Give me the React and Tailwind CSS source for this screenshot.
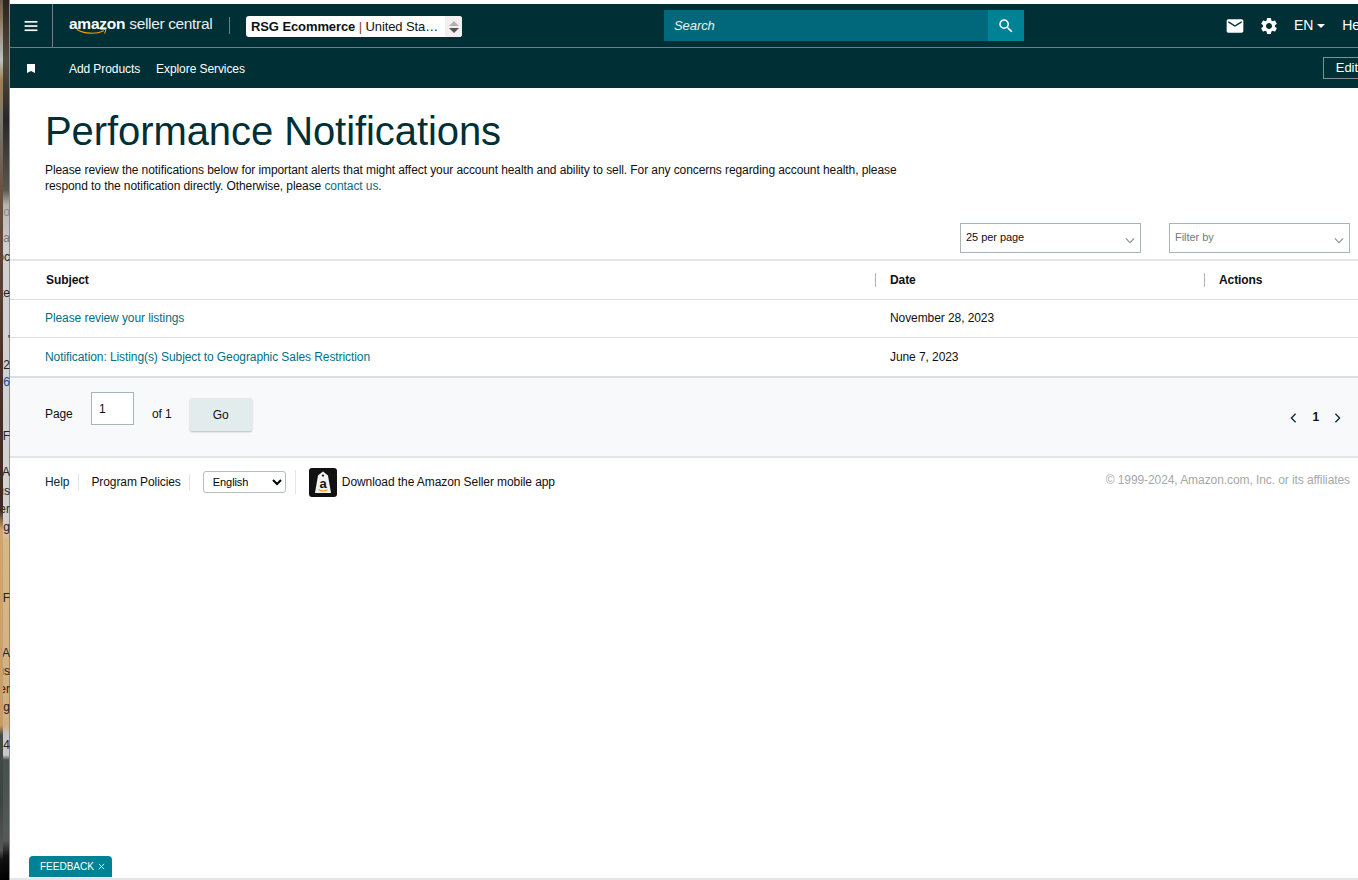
import React from "react";

const stripLines = [
  ["mt-[204px] text-[#8a8a8a]", "o"],
  ["mt-[10px] text-[#777]", "na"],
  ["mt-[3px] text-[#222]", "oc"],
  ["mt-[20px] text-[#222]", "te"],
  ["mt-[31px] text-[#222]", "'"],
  ["mt-[9px] text-[#222]", "02"],
  ["mt-[1px] text-[#1a4a9a]", "06"],
  ["mt-[38px] text-[#222]", "F"],
  ["mt-[20px] text-[#222]", "TA"],
  ["mt-[3px] text-[#222]", "us"],
  ["mt-[2px] text-[#222]", "er"],
  ["mt-[2px] text-[#222]", "ig"],
  ["mt-[55px] text-[#222]", "F"],
  ["mt-[39px] text-[#222]", "TA"],
  ["mt-[2px] text-[#222]", "us"],
  ["mt-[2px] text-[#222]", "er"],
  ["mt-[2px] text-[#222]", "ig"],
  ["mt-[22px] text-[#222]", "4"],
];

function Strip() {
  return (
    <div className="flex h-[880px] w-[10px] shrink-0 overflow-hidden">
      <div className="h-full w-[3px] bg-[linear-gradient(180deg,#6b5a4a_0px,#8a7458_16px,#b9c4c4_60px,#a08050_80px,#7a7a70_120px,#6a5040_190px,#4a3028_360px,#3e2a22_510px,#d2a56e_530px,#c89c68_725px,#444a44_735px,#3c4440_800px,#555_850px,#111_860px,#000_880px)]" />
      <div className="flex h-full w-[7px] flex-col bg-[linear-gradient(180deg,#2a2420_0px,#554b40_60px,#2a2826_120px,#5a5650_190px,#b8b4b0_205px,#d0d0d0_250px,#d2d2d2_520px,#d8b888_540px,#d0b080_725px,#c8c8c8_735px,#c8c8c8_755px,#46504c_760px,#555a58_840px,#111_856px,#000_880px)] shadow-[inset_-1px_0_0_#8c8c8c]">
        {stripLines.map(([cls, text], i) => (
          <div key={i} className={`flex h-4 shrink-0 justify-end overflow-hidden whitespace-nowrap text-[12px] leading-4 ${cls}`}>
            {text}
          </div>
        ))}
      </div>
    </div>
  );
}

function Icon({ d, className }) {
  return (
    <svg viewBox="0 0 24 24" fill="currentColor" className={className}>
      <path d={d} />
    </svg>
  );
}

function Chevron({ className }) {
  return (
    <svg viewBox="0 0 12 8" fill="none" stroke="currentColor" strokeWidth="1.5" className={className}>
      <path d="M1 1.5 6 6.5 11 1.5" />
    </svg>
  );
}

function Header() {
  return (
    <header className="flex h-[84px] flex-col bg-[#002f36] text-white">
      <div className="flex h-[44px] shrink-0 items-center border-b border-[#6a8084]">
        <div className="flex h-full w-[43px] shrink-0 items-center justify-center border-r border-[#6a8084]">
          <svg viewBox="0 0 14 12" className="h-[11px] w-[14px] translate-y-[1px]" fill="#fff">
            <rect y="0" width="14" height="1.8" />
            <rect y="4.6" width="14" height="1.8" />
            <rect y="9.2" width="14" height="1.8" />
          </svg>
        </div>
        <div className="relative ml-[16px] w-[144px] shrink-0 pb-[3px] text-[15.5px] leading-5 tracking-[-0.25px] whitespace-nowrap">
          <span className="font-bold">amazon</span> <span className="tracking-[-0.35px] text-[#e8eeee]">seller central</span>
          <svg viewBox="0 0 38 8" className="absolute left-[7px] top-[14px] h-[7px] w-[32px]" fill="none">
            <path d="M1 1.5C10 7 24 7.5 33 3" stroke="#f90" strokeWidth="1.4" />
            <path d="M29 1.5 35.5 1.5 34 6.5" stroke="#f90" strokeWidth="1.2" />
          </svg>
        </div>
        <div className="ml-[16px] h-[17px] w-px shrink-0 bg-[#6a8084]" />
        <div className="ml-[16px] flex h-[21px] w-[216px] shrink-0 translate-y-[1px] items-center rounded-[3px] bg-white text-[13px] text-[#0f1111]">
          <span className="ml-[5px] w-[188px] overflow-hidden text-ellipsis whitespace-nowrap tracking-[-0.1px]">
            <span className="font-bold">RSG Ecommerce</span>
            <span className="text-[#8a3a20]"> | </span>United States
          </span>
          <span className="ml-auto flex h-full w-[17px] flex-col items-center justify-center gap-[2px] rounded-r-[3px] bg-[#f0f0f0]">
            <span className="h-0 w-0 border-x-[5px] border-b-[5px] border-x-transparent border-b-[#b0b0b0]" />
            <span className="h-0 w-0 border-x-[5px] border-t-[5px] border-x-transparent border-t-[#555]" />
          </span>
        </div>
        <div className="ml-[202px] flex h-[31px] w-[360px] shrink-0">
          <div className="flex flex-1 items-center bg-[#00687a] pl-[10px] text-[13px] italic text-[#e8f0f0]">Search</div>
          <div className="flex w-[36px] items-center justify-center bg-[#008296]">
            <Icon className="h-[18px] w-[18px]" d="M15.5 14h-.79l-.28-.27A6.471 6.471 0 0 0 16 9.5 6.5 6.5 0 1 0 9.5 16c1.61 0 3.09-.59 4.23-1.57l.27.28v.79l5 4.99L20.49 19l-4.99-5zm-6 0C7.01 14 5 11.99 5 9.5S7.01 5 9.5 5 14 7.01 14 9.5 11.99 14 9.5 14z" />
          </div>
        </div>
        <Icon className="ml-[201px] h-[20px] w-[20px] shrink-0" d="M20 4H4c-1.1 0-1.99.9-1.99 2L2 18c0 1.1.9 2 2 2h16c1.1 0 2-.9 2-2V6c0-1.1-.9-2-2-2zm0 4l-8 5-8-5V6l8 5 8-5v2z" />
        <Icon className="ml-[14px] h-[20px] w-[20px] shrink-0" d="M19.14 12.94c.04-.3.06-.61.06-.94 0-.32-.02-.64-.07-.94l2.03-1.58a.49.49 0 0 0 .12-.61l-1.92-3.32a.488.488 0 0 0-.59-.22l-2.39.96c-.5-.38-1.03-.7-1.62-.94l-.36-2.54a.484.484 0 0 0-.48-.41h-3.84c-.24 0-.43.17-.47.41l-.36 2.54c-.59.24-1.13.57-1.62.94l-2.39-.96c-.22-.08-.47 0-.59.22L2.74 8.87c-.12.21-.08.47.12.61l2.03 1.58c-.05.3-.09.63-.09.94s.02.64.07.94l-2.03 1.58a.49.49 0 0 0-.12.61l1.92 3.32c.12.22.37.29.59.22l2.39-.96c.5.38 1.03.7 1.62.94l.36 2.54c.05.24.24.41.48.41h3.84c.24 0 .44-.17.47-.41l.36-2.54c.59-.24 1.13-.56 1.62-.94l2.39.96c.22.08.47 0 .59-.22l1.92-3.32c.12-.22.07-.47-.12-.61l-2.01-1.58zM12 15.6c-1.98 0-3.6-1.62-3.6-3.6s1.62-3.6 3.6-3.6 3.6 1.62 3.6 3.6-1.62 3.6-3.6 3.6z" />
        <span className="ml-[15px] shrink-0 text-[14px]">EN</span>
        <span className="ml-[4px] h-0 w-0 shrink-0 border-x-[4px] border-t-[4px] border-x-transparent border-t-white" />
        <span className="ml-[17px] shrink-0 text-[14px] whitespace-nowrap">Help</span>
      </div>
      <div className="flex min-h-0 flex-1 items-center pt-[2px] text-[12px] tracking-[-0.08px]">
        <svg viewBox="0 0 8 9" className="ml-[17px] h-[9px] w-[8px] shrink-0 -translate-y-[1px]" fill="#fff">
          <path d="M0 0h8v9L4 7 0 9z" />
        </svg>
        <span className="ml-[34px] shrink-0">Add Products</span>
        <span className="ml-[16px] shrink-0">Explore Services</span>
        <div className="ml-[1078px] flex h-[22px] shrink-0 -translate-y-[1px] items-center border border-[#7f9194] pl-[12px] text-[13px] whitespace-nowrap">Edit page</div>
      </div>
    </header>
  );
}

function Filter({ label, muted }) {
  return (
    <div className="flex h-[30px] w-[181px] items-center justify-between border border-[#a6b5b5] bg-white pl-[5px] pr-[5px] text-[11px] tracking-[-0.05px]">
      <span className={muted ? "-mt-[1px] text-[#6f7b7d]" : "-mt-[1px] text-[#0f1111]"}>{label}</span>
      <Chevron className="mt-[4px] h-[7px] w-[10px] text-[#8a9899]" />
    </div>
  );
}

function Table() {
  return (
    <div className="mt-[6px]">
      <div className="flex h-[41px] items-center border-y-2 border-y-[#e3e6e6] border-b border-b-[#dcdfdf] text-[12px] font-bold text-[#0f1111]">
        <div className="w-[865px] pl-[36px]">Subject</div>
        <div className="h-[14px] w-px bg-[#a6b5b5]" />
        <div className="w-[328px] pl-[14px]">Date</div>
        <div className="h-[14px] w-px bg-[#a6b5b5]" />
        <div className="pl-[14px]">Actions</div>
      </div>
      <div className="flex h-[38px] items-center border-b border-[#dcdfdf] pb-[2px] text-[12px]">
        <a className="w-[880px] pl-[35px] text-[#007185]">Please review your listings</a>
        <span className="text-[#0f1111]">November 28, 2023</span>
      </div>
      <div className="flex h-[40px] items-center border-b-2 border-[#dcdfdf] pb-[1px] text-[12px]">
        <a className="w-[880px] pl-[35px] text-[#007185]">Notification: Listing(s) Subject to Geographic Sales Restriction</a>
        <span className="text-[#0f1111]">June 7, 2023</span>
      </div>
    </div>
  );
}

function Pagination() {
  return (
    <div className="flex h-[80px] items-center border-b-2 border-[#e3e6e6] bg-[#f8f9fa] pb-[5px] pl-[35px] text-[12px] text-[#0f1111]">
      <span className="-mt-[2px] w-[46px]">Page</span>
      <div className="-mt-[13px] flex h-[33px] w-[43px] items-start border border-[#a6b5b5] bg-white pl-[7px] pt-[9px] leading-[14px]">1</div>
      <span className="ml-[18px] -mt-[2px]">of 1</span>
      <button className="ml-[18px] h-[33px] w-[62px] rounded-[2px] bg-[#e3ecec] text-[12px] text-[#0f1111] shadow-[0_1px_2px_rgba(0,0,0,0.25)]">Go</button>
      <div className="ml-auto mr-[17px] mt-[7px] flex items-center">
        <svg viewBox="0 0 8 12" fill="none" stroke="#002f36" strokeWidth="1.6" className="h-[10px] w-[7px]"><path d="M6.5 1 1.5 6l5 5" /></svg>
        <span className="mx-[15px] -mt-[2px] font-bold">1</span>
        <svg viewBox="0 0 8 12" fill="none" stroke="#002f36" strokeWidth="1.6" className="h-[10px] w-[7px]"><path d="M1.5 1l5 5-5 5" /></svg>
      </div>
    </div>
  );
}

function Footer() {
  return (
    <div className="flex h-[47px] items-center pl-[35px] pr-[8px] text-[12px] text-[#0f1111]">
      <span className="text-[#002f36]">Help</span>
      <span className="ml-[9px] h-[16px] w-px bg-[#e3e6e6]" />
      <span className="ml-[12px]">Program Policies</span>
      <span className="ml-[8px] h-[16px] w-px bg-[#e3e6e6]" />
      <select defaultValue="English" className="ml-[13px] h-[22px] w-[83px] rounded-[3px] border border-[#b8bdbd] bg-white pl-[5px] text-[11px] text-black [font-family:'Liberation_Sans',Arial,sans-serif]">
        <option>English</option>
      </select>
      <span className="ml-[9px] h-[24px] w-px bg-[#e3e6e6]" />
      <svg viewBox="0 0 28 29" className="ml-[13px] mt-[1px] h-[29px] w-[28px] shrink-0">
        <rect width="28" height="29" rx="3" fill="#111" />
        <path d="M14 3.5 19 7.5 22 25H6L9 7.5z" fill="#f2f2f2" />
        <circle cx="14" cy="7.6" r="1.1" fill="#111" />
        <text x="14" y="19.5" textAnchor="middle" fontSize="13" fontWeight="700" fontFamily="Liberation Sans, sans-serif" fill="#111">a</text>
        <path d="M9.5 21.5c3 1.8 6.5 1.8 9 .3" fill="none" stroke="#f90" strokeWidth="1.1" />
      </svg>
      <span className="ml-[5px]">Download the Amazon Seller mobile app</span>
      <span className="-mt-[3px] ml-auto text-[#a4a9a9]">© 1999-2024, Amazon.com, Inc. or its affiliates</span>
    </div>
  );
}

export default function App() {
  return (
    <div className="relative flex h-[880px] w-[1358px] overflow-hidden bg-white [font-family:'Liberation_Sans',Arial,sans-serif]">
      <Strip />
      <main className="flex h-full min-w-0 flex-1 flex-col pt-[4px] tracking-[-0.08px]">
        <Header />
        <div className="pl-[35px] pt-[17px]">
          <h1 className="text-[40px] leading-[52px] font-normal text-[#002f36]">Performance Notifications</h1>
          <p className="mt-[5px] w-[870px] text-[12px] leading-4 text-[#0f1111]">
            Please review the notifications below for important alerts that might affect your account health and ability to sell. For any concerns regarding account health, please respond to the notification directly. Otherwise, please <a className="text-[#007185]">contact us</a>.
          </p>
        </div>
        <div className="mt-[29px] flex justify-end gap-[28px] pr-[8px]">
          <Filter label="25 per page" />
          <Filter label="Filter by" muted />
        </div>
        <Table />
        <Pagination />
        <Footer />
        <div className="mt-auto h-[2px] bg-[#e3e6e6]" />
      </main>
      <div className="absolute bottom-[3px] left-[29px] flex h-[21px] w-[83px] items-center rounded-t-[4px] bg-[#008296] pl-[11px] text-[10px] text-white">
        FEEDBACK
        <svg viewBox="0 0 8 8" className="ml-[4px] h-[7px] w-[7px]" stroke="#fff" strokeWidth="1"><path d="M1 1l6 6M7 1 1 7" /></svg>
      </div>
    </div>
  );
}
